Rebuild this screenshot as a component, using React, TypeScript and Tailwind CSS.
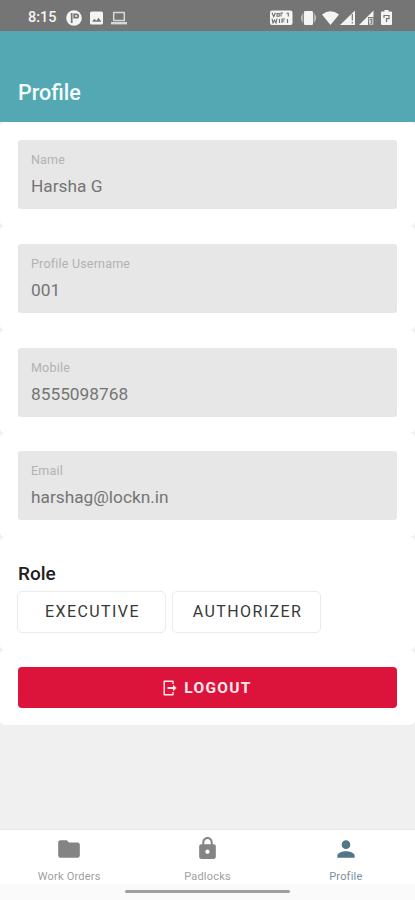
import type { ReactNode } from 'react'
import { MdFolder, MdLock, MdPerson } from 'react-icons/md'

const fields = [
  { label: 'Name', value: 'Harsha G' },
  { label: 'Profile Username', value: '001' },
  { label: 'Mobile', value: '8555098768' },
  { label: 'Email', value: 'harshag@lockn.in' },
]

const roles = ['EXECUTIVE', 'AUTHORIZER']

function StatusBar() {
  return (
    <div className="flex h-[31px] items-start justify-between bg-[#757575] pl-7 pr-[23px] pt-[10px] text-[#f4f4f4]">
      <div className="flex items-center">
        <span className="w-[30px] text-[14.5px] font-medium leading-4">8:15</span>
        <svg className="ml-2 h-4 w-4" viewBox="0 0 16 16">
          <circle cx="8" cy="8" r="7.8" fill="currentColor" />
          <path d="M5.7 3v10M8.2 4.3h2.4a1.7 1.7 0 0 1 0 3.4H8.2z" fill="none" stroke="#757575" strokeWidth="1.7" />
        </svg>
        <svg className="ml-2 h-[14px] w-[13px]" viewBox="0 0 13 14">
          <rect y=".5" width="13" height="13" rx="1.5" fill="currentColor" />
          <path d="M2 10.8l2.5-3 1.8 2 2.4-3 2.6 4z" fill="#757575" />
        </svg>
        <svg className="ml-2 h-[14px] w-4" viewBox="0 0 16 14">
          <path d="M2.7 1.5h10.6v8H2.7z" fill="none" stroke="#d8d8d8" strokeWidth="1.5" />
          <path d="M0 11h16v2.4H0z" fill="#d8d8d8" />
        </svg>
      </div>
      <div className="flex items-center">
        <svg className="h-4 w-[23px]" viewBox="0 0 23 16">
          <rect y=".5" width="22.5" height="14.5" rx="2" fill="currentColor" />
          <g fill="none" stroke="#6f6f6f" strokeWidth="1.1">
            <path d="M2 2.7l1.7 4 1.7-4M7 3.5h2.2v2.7H7zM11 6.5V3h2M16.5 3.2h1.8v3.2M2 8.7l1 4.3 1.5-3 1.5 3 1-4.3M9.5 9v4M12 13V9h3M12 11h2.5M17.5 9v4" />
          </g>
        </svg>
        <svg className="ml-[8px] h-4 w-[15px]" viewBox="0 0 15 16">
          <rect x="3" y="1" width="9" height="14" rx="1.2" fill="currentColor" />
          <path d="M1.8 3.5v9M13.2 3.5v9M.4 5.5v5M14.6 5.5v5" stroke="#cfcfcf" strokeWidth=".9" />
        </svg>
        <svg className="ml-[6px] h-4 w-[17px]" viewBox="0 0 17 16">
          <path d="M0 4.5Q8.5-1.8 17 4.5L8.5 15z" fill="currentColor" />
        </svg>
        <svg className="ml-[1px] h-4 w-[15px]" viewBox="0 0 15 16">
          <path d="M0 15L15 .5V15z" fill="currentColor" />
          <path d="M12.3 4v6.5M12.3 12v1.5" stroke="#757575" strokeWidth="1.2" />
        </svg>
        <svg className="ml-1 h-4 w-[15px]" viewBox="0 0 15 16">
          <path d="M0 15L14.5.5V7H9v8z" fill="currentColor" />
          <path d="M10.2 8.5h3.6v5.8h-3zM11.7 10v3" fill="none" stroke="#d5d5d5" strokeWidth="1.1" />
        </svg>
        <svg className="ml-[7px] h-4 w-[11px]" viewBox="0 0 11 16">
          <path d="M3.5 0h4v1.5H10q1 0 1 1V14q0 1-1 1H1q-1 0-1-1V2.5q0-1 1-1h2.5z" fill="currentColor" />
          <path d="M3 8V5.5h5v3.2H5.5V12" fill="none" stroke="#757575" strokeWidth="1.2" />
        </svg>
      </div>
    </div>
  )
}

function Card({ className, children }: { className: string; children: ReactNode }) {
  return <section className={`shrink-0 rounded-[5px] bg-white px-[18px] ${className}`}>{children}</section>
}

function NavItem({ label, active, children }: { label: string; active?: boolean; children: ReactNode }) {
  return (
    <a
      className={`flex flex-1 flex-col items-center pt-[6px] ${active ? 'text-[#527588]' : 'text-[#848484]'}`}
    >
      {children}
      <span className={`mt-[8px] text-[11px] leading-[14px] tracking-[0.2px] ${active ? 'text-[#78909c]' : 'text-[#a0a0a0]'}`}>
        {label}
      </span>
    </a>
  )
}

export default function App() {
  return (
    <div className="flex h-[900px] w-[415px] flex-col overflow-hidden bg-[#f0f0f0] font-['Roboto',sans-serif]">
      <StatusBar />
      <header className="h-[91px] shrink-0 bg-[#53a8b4] pl-[18px] pt-[49px]">
        <h1 className="text-[21.5px] font-medium leading-[26px] text-[#f2fcfd]">Profile</h1>
      </header>

      <main className="flex flex-1 flex-col">
        {fields.map((field) => (
          <Card key={field.label} className="h-[103.75px] pt-[18px]">
            <div className="h-[69px] rounded-[3px] bg-[#e7e7e7] pl-[13px] pt-[12px]">
              <p className="text-[12.5px] leading-4 tracking-[0.2px] text-[#b2b2b2]">{field.label}</p>
              <p className="mt-[7px] text-[17.3px] leading-[22px] text-[#757575]">{field.value}</p>
            </div>
          </Card>
        ))}

        <Card className="h-[113px] pt-[25px]">
          <h2 className="text-[19px] font-medium leading-6 text-[#202020]">Role</h2>
          <div className="-ml-px mt-[5px] flex gap-[6px]">
            {roles.map((role) => (
              <button
                key={role}
                className="h-[42px] w-[149px] rounded-[5px] border border-[#ebebeb] pl-[2px] text-[16px] tracking-[1.4px] text-[#383838]"
              >
                {role}
              </button>
            ))}
          </div>
        </Card>

        <Card className="h-[75px] pt-[17px]">
          <button className="flex h-[41px] w-full items-center justify-center gap-[7px] rounded-[4px] bg-[#dc143c] text-[#fde8ec]">
            <svg className="h-4 w-[14px]" viewBox="0 0 14 16" fill="none" stroke="currentColor">
              <path d="M10 4V1.2H1.2v13.6H10V12" strokeWidth="1.4" strokeLinejoin="round" />
              <path d="M4.5 8h6" strokeWidth="2" />
              <path d="M10 4.8L13.7 8 10 11.2z" fill="currentColor" stroke="none" />
            </svg>
            <span className="text-[15.5px] font-bold leading-5 tracking-[1.3px]">LOGOUT</span>
          </button>
        </Card>
      </main>

      <nav className="flex h-[55px] shrink-0 border-t border-[#e8e8e8] bg-white">
        <NavItem label="Work Orders">
          <MdFolder className="h-7 w-7" />
        </NavItem>
        <NavItem label="Padlocks">
          <MdLock className="h-[27px] w-[27px] mb-px" />
        </NavItem>
        <NavItem label="Profile" active>
          <MdPerson className="h-7 w-7" />
        </NavItem>
      </nav>
      <div className="flex h-4 shrink-0 justify-center bg-[#fafafa] pt-[6px]">
        <div className="h-[3px] w-[165px] rounded-full bg-[#a0a0a0]" />
      </div>
    </div>
  )
}
